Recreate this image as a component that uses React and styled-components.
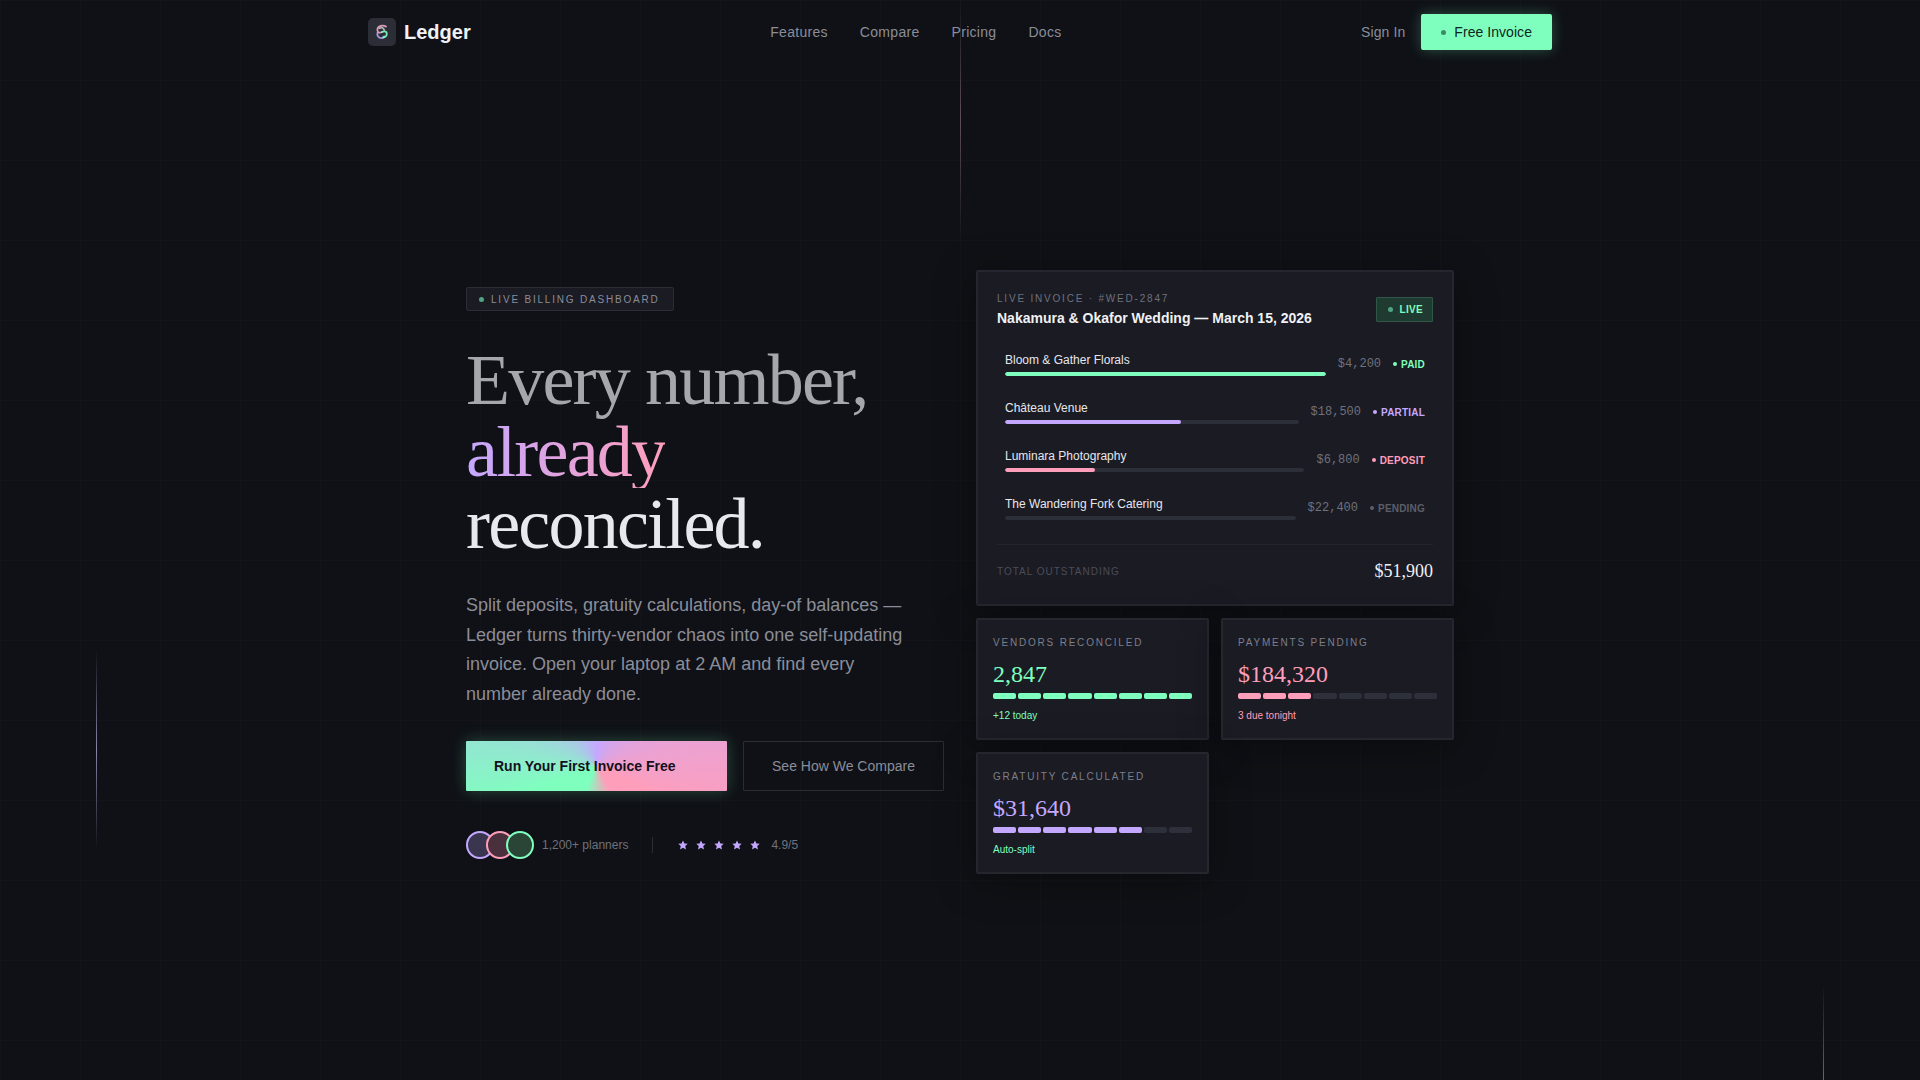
import React from "react";
import styled, { createGlobalStyle } from "styled-components";

const mint = "#7fffbe";
const lavender = "#c4a8ff";
const pink = "#ff9ebb";

const GlobalStyle = createGlobalStyle`
  html, body {
    margin: 0;
    padding: 0;
    background: #0f1116;
  }
  * { box-sizing: border-box; }
`;

const Page = styled.div`
  position: relative;
  min-height: 100vh;
  height: 1080px;
  overflow: hidden;
  font-family: "Liberation Sans", Arial, sans-serif;
  background-color: #0f1116;
  background-image:
    linear-gradient(rgba(255, 255, 255, 0.01) 1px, transparent 1px),
    linear-gradient(90deg, rgba(255, 255, 255, 0.01) 1px, transparent 1px);
  background-size: 80px 80px;
`;

const Beam = styled.div`
  position: absolute;
  left: ${(p) => p.$x}px;
  top: ${(p) => p.$y}px;
  width: 1px;
  height: ${(p) => p.$h}px;
  background: linear-gradient(180deg, transparent, ${(p) => p.$color}, transparent);
`;

const Nav = styled.nav`
  position: relative;
  display: flex;
  align-items: center;
  justify-content: space-between;
  width: 1184px;
  height: 64px;
  margin: 0 auto;
`;

const Brand = styled.div`
  display: flex;
  align-items: center;
  gap: 8px;
  color: #f0f1f5;
  font-size: 20px;
  font-weight: 700;
`;

const LogoBox = styled.div`
  display: flex;
  align-items: center;
  justify-content: center;
  width: 28px;
  height: 28px;
  border-radius: 5px;
  background: #2b2e37;
`;

const NavLinks = styled.div`
  display: flex;
  gap: 32px;
`;

const NavLink = styled.a`
  color: #8b8d99;
  font-size: 14px;
  letter-spacing: 0.3px;
`;

const NavRight = styled.div`
  display: flex;
  align-items: center;
  gap: 16px;
`;

const SignIn = styled.a`
  color: #8b8d99;
  font-size: 14px;
  letter-spacing: 0.1px;
`;

const FreeButton = styled.button`
  display: flex;
  align-items: center;
  gap: 8px;
  height: 36px;
  padding: 0 20px;
  border: 0;
  border-radius: 2px;
  background: ${mint};
  color: #10251c;
  font-family: inherit;
  font-size: 14px;
  letter-spacing: 0.05px;
  box-shadow: 0 0 14px rgba(127, 255, 190, 0.28);
`;

const ButtonDot = styled.span`
  width: 5px;
  height: 5px;
  border-radius: 50%;
  background: #3f8a66;
`;

const Hero = styled.main`
  position: relative;
  display: grid;
  grid-template-columns: 478px 478px;
  gap: 32px;
  align-items: center;
  width: 988px;
  height: 1016px;
  margin: 0 auto;
`;

const Intro = styled.div`
  display: flex;
  flex-direction: column;
  align-items: flex-start;
  padding-top: 2px;
`;

const Badge = styled.div`
  display: flex;
  align-items: center;
  gap: 7px;
  height: 24px;
  padding: 0 13px 0 12px;
  border: 1px solid #2a2d36;
  border-radius: 2px;
  background: #1a1b23;
  color: #8b8d99;
  font-size: 10px;
  letter-spacing: 1.8px;
`;

const Dot = styled.span`
  flex: none;
  width: ${(p) => p.$size || 4}px;
  height: ${(p) => p.$size || 4}px;
  border-radius: 50%;
  background: ${(p) => p.$color};
`;

const Headline = styled.h1`
  margin: 33px 0 31px;
  font-family: "Liberation Serif", "Times New Roman", serif;
  font-size: 72px;
  font-weight: 400;
  line-height: 72px;
  letter-spacing: -1.8px;
`;

const HeadLine = styled.span`
  display: block;
  color: ${(p) => p.$color};
`;

const GradientWord = styled.span`
  display: block;
  width: fit-content;
  background: linear-gradient(90deg, ${lavender}, ${pink});
  -webkit-background-clip: text;
  background-clip: text;
  color: transparent;
`;

const Lead = styled.p`
  width: 448px;
  margin: 0 0 32px;
  color: #8b8d99;
  font-size: 18px;
  line-height: 29.5px;
`;

const Actions = styled.div`
  display: flex;
  gap: 16px;
  margin-bottom: 40px;
`;

const PrimaryButton = styled.button`
  width: 261px;
  height: 50px;
  padding: 0 28px;
  border: 0;
  border-radius: 1px;
  background: conic-gradient(
    from 0deg at 50% 50%,
    ${lavender} 0deg,
    ${pink} 115deg,
    ${pink} 150deg,
    ${mint} 205deg,
    ${mint} 250deg,
    ${lavender} 360deg
  );
  color: #14101c;
  font-family: inherit;
  font-size: 14px;
  font-weight: 700;
  text-align: left;
  box-shadow: 0 0 16px rgba(127, 255, 190, 0.25);
`;

const GhostButton = styled.button`
  width: 201px;
  height: 50px;
  border: 1px solid #2a2d36;
  border-radius: 1px;
  background: transparent;
  color: #8b8d99;
  font-family: inherit;
  font-size: 14px;
`;

const Social = styled.div`
  display: flex;
  align-items: center;
  height: 28px;
`;

const Avatars = styled.div`
  display: flex;
  margin-right: 8px;
`;

const Avatar = styled.span`
  width: 28px;
  height: 28px;
  margin-left: -8px;
  border: 2px solid ${(p) => p.$border};
  border-radius: 50%;
  background: ${(p) => p.$fill};
  &:first-child {
    margin-left: 0;
  }
`;

const SocialText = styled.span`
  color: #6f717d;
  font-size: 12px;
`;

const Divider = styled.span`
  width: 1px;
  height: 16px;
  margin: 0 25px 0 24px;
  background: #2a2d36;
`;

const Stars = styled.div`
  display: flex;
  gap: 8px;
  margin-right: 11px;
`;

const Board = styled.section`
  display: grid;
  grid-template-columns: 1fr 1fr;
  gap: 12px;
`;

const Card = styled.div`
  border: 2px solid #25262e;
  border-radius: 2px;
  background: #1a1b23;
  box-shadow: 0 6px 40px rgba(0, 0, 0, 0.35);
`;

const InvoiceCard = styled(Card)`
  grid-column: 1 / -1;
  height: 336px;
  padding: 21px 19px 19px;
`;

const InvoiceHead = styled.header`
  display: flex;
  align-items: center;
  justify-content: space-between;
  margin-bottom: 14px;
`;

const Eyebrow = styled.div`
  margin-bottom: 6px;
  color: #6f717d;
  font-size: 10px;
  letter-spacing: 1.8px;
`;

const InvoiceTitle = styled.div`
  color: #f0f1f5;
  font-size: 14px;
  font-weight: 700;
`;

const LiveTag = styled.span`
  display: flex;
  align-items: center;
  gap: 7px;
  height: 25px;
  padding: 0 9px 0 11px;
  border: 1px solid #2f5747;
  border-radius: 1px;
  background: #1f3a30;
  color: ${mint};
  font-size: 10px;
  font-weight: 700;
  letter-spacing: 0.3px;
`;

const Row = styled.div`
  display: flex;
  align-items: center;
  gap: 12px;
  height: 48px;
  padding: 0 8px;
`;

const RowMain = styled.div`
  flex: 1;
  min-width: 0;
`;

const RowName = styled.div`
  margin-bottom: 5px;
  color: #e6e7ec;
  font-size: 12px;
  line-height: 14px;
`;

const Track = styled.div`
  height: 4px;
  border-radius: 2px;
  background: #2c2e38;
  overflow: hidden;
`;

const Fill = styled.div`
  height: 100%;
  border-radius: 2px;
  background: ${(p) => p.$color};
`;

const Amount = styled.span`
  color: #6f717d;
  font-family: "Liberation Mono", "Courier New", monospace;
  font-size: 12px;
`;

const Status = styled.span`
  display: flex;
  align-items: center;
  gap: 4px;
  color: ${(p) => p.$color};
  font-size: 10px;
  font-weight: 700;
  letter-spacing: 0.2px;
`;

const TotalRow = styled.div`
  display: flex;
  align-items: center;
  justify-content: space-between;
  margin-top: 12px;
  padding-top: 16px;
  border-top: 1px solid #24252d;
`;

const TotalLabel = styled.span`
  color: #4b4d58;
  font-size: 10px;
  letter-spacing: 1px;
`;

const TotalValue = styled.span`
  color: #f0f1f5;
  font-family: "Liberation Serif", "Times New Roman", serif;
  font-size: 18px;
`;

const StatCard = styled(Card)`
  height: 122px;
  padding: 17px 15px 15px;
`;

const StatLabel = styled.div`
  margin-bottom: 12px;
  color: #7d7f8b;
  font-size: 10px;
  letter-spacing: 1.8px;
`;

const StatValue = styled.div`
  margin-bottom: 5px;
  color: ${(p) => p.$color};
  font-family: "Liberation Serif", "Times New Roman", serif;
  font-size: 24px;
  line-height: 28px;
`;

const Segments = styled.div`
  display: grid;
  grid-template-columns: repeat(8, 1fr);
  gap: 2px;
  margin-bottom: 11px;
`;

const Segment = styled.span`
  height: 6px;
  border-radius: 2px;
  background: ${(p) => (p.$on ? p.$color : "#2d303a")};
`;

const StatNote = styled.div`
  color: ${(p) => p.$color};
  font-size: 10px;
`;

function LogoMark() {
  return (
    <svg width="18" height="18" viewBox="0 0 18 18" fill="none" strokeWidth="1.8" strokeLinecap="round">
      <path d="M13 3.6C9.6 1.6 5 3 4.4 6.4c-.4 2.4 1.4 4.2 4.6 2.6" stroke="#f0a8c8" opacity="0.9" />
      <path d="M4.6 9.6c-1 3 1 5.6 4 5.6 1.6 0 2.4-.8 2.6-1.8" stroke={lavender} opacity="0.85" />
      <path d="M9 9c3-1.6 5-.2 4.8 2.2-.2 2-2 3.2-3.6 3" stroke={mint} opacity="0.9" />
      <path d="M6.6 5.2c2-1 3.8-.4 4.6 1.6" stroke="#e8e9ee" opacity="0.7" />
    </svg>
  );
}

function Star() {
  return (
    <svg width="10" height="10" viewBox="0 0 24 24" fill={lavender}>
      <path d="M12 1l3.4 7.3 7.9.9-5.9 5.4 1.7 7.9L12 18.4l-7.1 4.1 1.7-7.9L.7 9.2l7.9-.9z" />
    </svg>
  );
}

const vendors = [
  { name: "Bloom & Gather Florals", amount: "$4,200", status: "PAID", color: mint, pct: 100 },
  { name: "Château Venue", amount: "$18,500", status: "PARTIAL", color: lavender, pct: 60 },
  { name: "Luminara Photography", amount: "$6,800", status: "DEPOSIT", color: pink, pct: 30 },
  { name: "The Wandering Fork Catering", amount: "$22,400", status: "PENDING", color: "#5c5e6a", pct: 0 },
];

const stats = [
  { label: "VENDORS RECONCILED", value: "2,847", color: mint, on: 8, note: "+12 today", noteColor: mint },
  { label: "PAYMENTS PENDING", value: "$184,320", color: pink, on: 3, note: "3 due tonight", noteColor: pink },
  { label: "GRATUITY CALCULATED", value: "$31,640", color: lavender, on: 6, note: "Auto-split", noteColor: mint },
];

export default function App() {
  return (
    <>
      <GlobalStyle />
      <Page>
        <Beam $x={96} $y={650} $h={200} $color="#8886aa" />
        <Beam $x={960} $y={0} $h={240} $color="#5f4d58" />
        <Beam $x={1823} $y={985} $h={190} $color="#47776a" />

        <Nav>
          <Brand>
            <LogoBox>
              <LogoMark />
            </LogoBox>
            Ledger
          </Brand>
          <NavLinks>
            <NavLink>Features</NavLink>
            <NavLink>Compare</NavLink>
            <NavLink>Pricing</NavLink>
            <NavLink>Docs</NavLink>
          </NavLinks>
          <NavRight>
            <SignIn>Sign In</SignIn>
            <FreeButton>
              <ButtonDot />
              Free Invoice
            </FreeButton>
          </NavRight>
        </Nav>

        <Hero>
          <Intro>
            <Badge>
              <Dot $size={5} $color="#4fa583" />
              LIVE BILLING DASHBOARD
            </Badge>
            <Headline>
              <HeadLine $color="#a6a7ac">Every number,</HeadLine>
              <GradientWord>already</GradientWord>
              <HeadLine $color="#e8e9ee">reconciled.</HeadLine>
            </Headline>
            <Lead>
              Split deposits, gratuity calculations, day-of balances — Ledger turns thirty-vendor chaos into one
              self-updating invoice. Open your laptop at 2 AM and find every number already done.
            </Lead>
            <Actions>
              <PrimaryButton>Run Your First Invoice Free</PrimaryButton>
              <GhostButton>See How We Compare</GhostButton>
            </Actions>
            <Social>
              <Avatars>
                <Avatar $border={lavender} $fill="#3a3650" />
                <Avatar $border={pink} $fill="#4a2f3c" />
                <Avatar $border={mint} $fill="#2a4435" />
              </Avatars>
              <SocialText>1,200+ planners</SocialText>
              <Divider />
              <Stars>
                {[0, 1, 2, 3, 4].map((i) => (
                  <Star key={i} />
                ))}
              </Stars>
              <SocialText>4.9/5</SocialText>
            </Social>
          </Intro>

          <Board>
            <InvoiceCard>
              <InvoiceHead>
                <div>
                  <Eyebrow>LIVE INVOICE · #WED-2847</Eyebrow>
                  <InvoiceTitle>Nakamura &amp; Okafor Wedding — March 15, 2026</InvoiceTitle>
                </div>
                <LiveTag>
                  <Dot $color="#4fa583" $size={5} />
                  LIVE
                </LiveTag>
              </InvoiceHead>
              {vendors.map((v) => (
                <Row key={v.name}>
                  <RowMain>
                    <RowName>{v.name}</RowName>
                    <Track>
                      <Fill $color={v.color} style={{ width: `${v.pct}%` }} />
                    </Track>
                  </RowMain>
                  <Amount>{v.amount}</Amount>
                  <Status $color={v.color}>
                    <Dot $color={v.color} />
                    {v.status}
                  </Status>
                </Row>
              ))}
              <TotalRow>
                <TotalLabel>TOTAL OUTSTANDING</TotalLabel>
                <TotalValue>$51,900</TotalValue>
              </TotalRow>
            </InvoiceCard>

            {stats.map((s) => (
              <StatCard key={s.label}>
                <StatLabel>{s.label}</StatLabel>
                <StatValue $color={s.color}>{s.value}</StatValue>
                <Segments>
                  {Array.from({ length: 8 }, (_, i) => (
                    <Segment key={i} $on={i < s.on} $color={s.color} />
                  ))}
                </Segments>
                <StatNote $color={s.noteColor}>{s.note}</StatNote>
              </StatCard>
            ))}
          </Board>
        </Hero>
      </Page>
    </>
  );
}
